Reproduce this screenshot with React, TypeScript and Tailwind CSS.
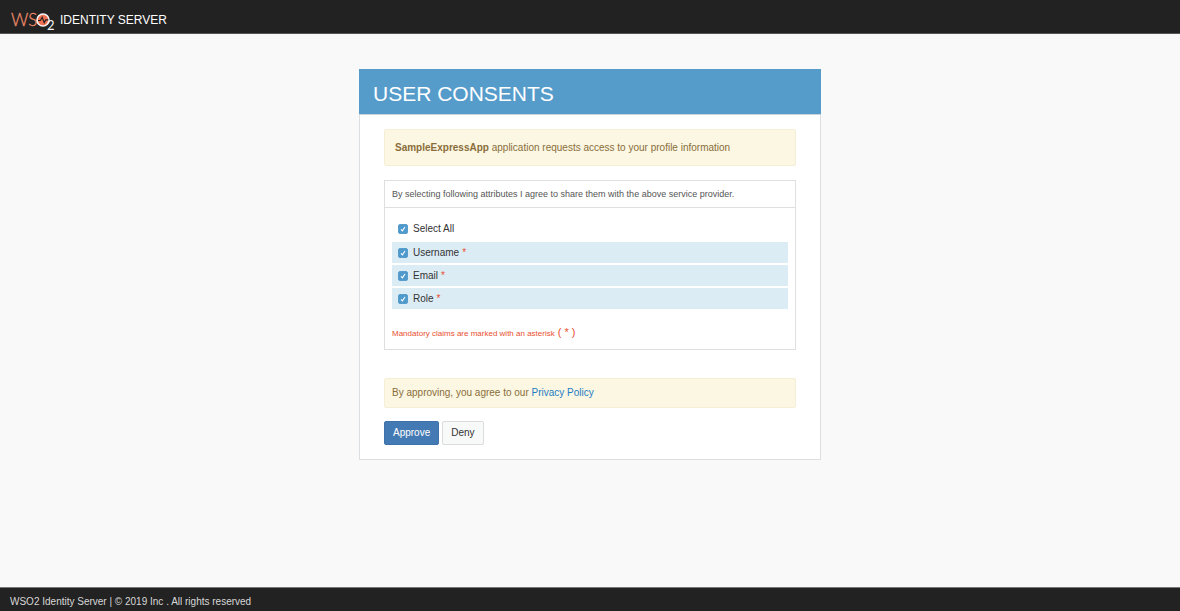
import { useState } from "react";

const CLAIMS = ["Username", "Email", "Role"];

function Logo() {
  return (
    <svg
      width="46"
      height="24"
      viewBox="0 0 46 24"
      role="img"
      aria-label="WSO2"
      className="overflow-visible"
    >
      <text x="0" y="18" fontSize="17" fontWeight="300" fill="#ee8b69" stroke="#ee8b69" strokeWidth="0.3" fontFamily="Lato, sans-serif">
        WS
      </text>
      <circle cx="32" cy="12" r="6" fill="#ee6f52" stroke="#f4f4f4" strokeWidth="1.6" />
      <path d="M27 12.5h2.4l1.8-3.2 2 5.2 1.5-2.6h2.6" fill="none" stroke="#222" strokeWidth="1.2" />
      <text x="36" y="22" fontSize="13" fontWeight="400" fill="#f4f4f4" fontFamily="Lato, sans-serif">
        2
      </text>
    </svg>
  );
}

type CheckProps = {
  label: string;
  checked: boolean;
  onChange: (value: boolean) => void;
  required?: boolean;
};

function Check({ label, checked, onChange, required }: CheckProps) {
  return (
    <label className="flex h-full items-center">
      <span className="grid size-[10px] shrink-0 place-items-center">
        <input
          type="checkbox"
          checked={checked}
          onChange={(e) => onChange(e.target.checked)}
          className="peer col-start-1 row-start-1 size-[10px] appearance-none rounded-[2px] border border-[#5a9dcb] bg-white checked:bg-[#4f9acd]"
        />
        <svg
          viewBox="0 0 10 10"
          className="pointer-events-none invisible col-start-1 row-start-1 size-[10px] peer-checked:visible"
          aria-hidden="true"
        >
          <path d="M3 5.3l1.4 1.5 2.6-3.8" fill="none" stroke="#fff" strokeWidth="1.1" />
        </svg>
      </span>
      <span className="ml-[5px]">{label}</span>
      {required && <span className="ml-[3px] text-[#e8502f]">*</span>}
    </label>
  );
}

export default function App() {
  const [selected, setSelected] = useState<string[]>(CLAIMS);

  const toggle = (claim: string, value: boolean) =>
    setSelected((list) => (value ? [...list, claim] : list.filter((c) => c !== claim)));

  return (
    <div className="flex min-h-screen flex-col bg-[#f9f9f9] font-['Liberation_Sans',Arial,sans-serif] text-[10px] leading-[14px] text-[#333]">
      <header className="flex h-[34px] items-center border-b border-[#555] bg-[#222] pl-[11px] text-white">
        <a href="#" className="flex items-center gap-[3px] pt-[6px]">
          <Logo />
          <span className="text-xs">IDENTITY SERVER</span>
        </a>
      </header>

      <main className="grow px-4 pt-[35px] pb-8">
        <section className="mx-auto max-w-[462px] border border-[#dcdfe1] bg-white">
          <h1 className="-mx-px -mt-px flex h-[46px] items-center border-b border-[#c9d3d9] bg-[#569ccb] px-[14px] pt-[5px] text-[21px] text-white">
            USER CONSENTS
          </h1>
          <form className="px-[24px] pt-[14px] pb-[14px]" onSubmit={(e) => e.preventDefault()}>
            <div className="flex h-[37px] items-center rounded-[2px] border border-[#f6efd6] bg-[#fbf7e2] px-[10px] text-[#8a6d3b]">
              <p>
                <strong>SampleExpressApp</strong> application requests access to your profile information
              </p>
            </div>

            <fieldset className="mt-[14px] border border-[#dfdfdf]">
              <p className="border-b border-[#dfdfdf] px-[7px] py-[6px] text-[9px] text-[#555]">
                By selecting following attributes I agree to share them with the above service provider.
              </p>
              <div className="px-[7px] pt-[10px] pb-[8px]">
                <div className="h-[22px] px-[6px]">
                  <Check
                    label="Select All"
                    checked={selected.length === CLAIMS.length}
                    onChange={(value) => setSelected(value ? CLAIMS : [])}
                  />
                </div>
                <ul className="mt-[2px] flex flex-col gap-[2px]">
                  {CLAIMS.map((claim) => (
                    <li key={claim} className="h-[21px] bg-[#dcecf5] px-[6px]">
                      <Check
                        label={claim}
                        checked={selected.includes(claim)}
                        onChange={(value) => toggle(claim, value)}
                        required
                      />
                    </li>
                  ))}
                </ul>
                <p className="mt-[16px] text-[11px] text-[#e8502f]">
                  <span className="text-[8px]">Mandatory claims are marked with an asterisk</span> ( * )
                </p>
              </div>
            </fieldset>

            <div className="mt-[28px] flex h-[30px] items-center rounded-[2px] border border-[#f6efd6] bg-[#fbf7e2] px-[7px] text-[#8a6d3b]">
              <p>
                By approving, you agree to our{" "}
                <a href="#" className="text-[#1f7cc4]">
                  Privacy Policy
                </a>
              </p>
            </div>

            <div className="mt-[13px] flex gap-[3px]">
              <button
                type="submit"
                className="h-[24px] rounded-[2px] border border-[#3f72aa] bg-[#447ab3] px-2 text-white"
              >
                Approve
              </button>
              <button
                type="button"
                className="h-[24px] rounded-[2px] border border-[#dcdcdc] bg-[#f8f9f9] px-2 text-[#333]"
              >
                Deny
              </button>
            </div>
          </form>
        </section>
      </main>

      <footer className="flex h-[24px] items-center border-t border-[#777] bg-[#222] px-[10px] pt-[5px] text-[#d8d8d8]">
        WSO2 Identity Server | © 2019 Inc . All rights reserved
      </footer>
    </div>
  );
}
